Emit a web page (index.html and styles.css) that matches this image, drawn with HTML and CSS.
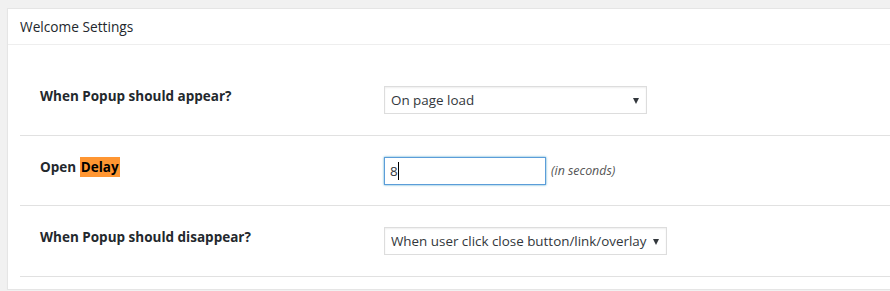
FILE: index.html
```html
<!DOCTYPE html>
<html lang="en">
  <head>
    <meta charset="utf-8">
    <title>Welcome Settings</title>
    <link rel="stylesheet" href="styles.css">
  </head>
  <body>
    <div class="wrap">
      <div class="postbox">
        <h2 class="hndle">Welcome Settings</h2>
        <div class="inside">
          <div class="form-row">
            <div class="form-label">When Popup should appear?</div>
            <div class="form-field">
              <span class="select-wrap">
                <select class="field-select select-appear">
                  <option>On page load</option>
                </select>
              </span>
            </div>
          </div>
          <div class="form-row">
            <div class="form-label">Open <mark class="find-hit">Delay</mark></div>
            <div class="form-field">
              <span class="input-wrap">
                <input class="field-input is-focus" type="text" value="8">
                <span class="caret"></span>
              </span>
              <em class="field-note">(in seconds)</em>
            </div>
          </div>
          <div class="form-row">
            <div class="form-label">When Popup should disappear?</div>
            <div class="form-field">
              <span class="select-wrap">
                <select class="field-select select-disappear">
                  <option>When user click close button/link/overlay</option>
                </select>
              </span>
            </div>
          </div>
        </div>
      </div>
    </div>
  </body>
</html>
```

FILE: styles.css
```css
body {
  margin: 0;
  background: #f1f1f1;
  font-family: "Open Sans", "Noto Sans", sans-serif;
  color: #23282d;
  overflow: hidden;
}
.wrap {
  padding: 8px 0 0 7px;
}
.postbox {
  background: #fff;
  border: 1px solid #e5e5e5;
  border-right: 0;
  box-shadow: 0 1px 1px rgba(0, 0, 0, 0.04);
  margin-right: -20px;
}
.hndle {
  margin: 0;
  padding: 8px 12px;
  font-size: 13.7px;
  font-weight: 400;
  line-height: 19px;
  border-bottom: 1px solid #eee;
}
.inside {
  padding: 20px 0 12px 12px;
}
.form-row {
  display: flex;
  align-items: flex-start;
  padding: 21px 0 20.5px 20px;
  border-bottom: 1px solid #e1e1e1;
}
.form-label {
  width: 344px;
  flex: none;
  font-size: 13.5px;
  font-weight: 700;
  line-height: 18px;
  padding-top: 1px;
}
.find-hit {
  background: #ff9632;
  color: #000;
  padding: 1px 1px;
}
.form-field {
  display: flex;
  align-items: center;
  gap: 5px;
}
.select-wrap {
  position: relative;
  display: inline-block;
}
.select-wrap::after {
  content: "";
  position: absolute;
  right: 8px;
  top: 12px;
  border-left: 3.5px solid transparent;
  border-right: 3.5px solid transparent;
  border-top: 6px solid #32373c;
  pointer-events: none;
}
.field-select {
  appearance: none;
  -webkit-appearance: none;
  height: 28px;
  margin: 0;
  padding: 0 6px;
  border: 1px solid #ddd;
  border-radius: 0;
  background: #fff;
  box-shadow: inset 0 1px 2px rgba(0, 0, 0, 0.07);
  font-family: inherit;
  font-size: 13.4px;
  color: #32373c;
}
.select-appear {
  width: 263px;
}
.select-disappear {
  width: 283px;
}
.input-wrap {
  position: relative;
  display: inline-block;
}
.field-input {
  box-sizing: border-box;
  width: 162px;
  height: 28px;
  margin: 0;
  padding: 0 5px;
  border: 1px solid #ddd;
  box-shadow: inset 0 1px 2px rgba(0, 0, 0, 0.07);
  font-family: inherit;
  font-size: 13.4px;
  color: #32373c;
  outline: none;
}
.field-input.is-focus {
  border-color: #5b9dd9;
  box-shadow: 0 0 2px rgba(30, 140, 190, 0.8);
}
.caret {
  position: absolute;
  left: 14px;
  top: 5px;
  width: 1px;
  height: 18px;
  background: #000;
}
.field-note {
  font-size: 12.4px;
  color: #555;
}
```
